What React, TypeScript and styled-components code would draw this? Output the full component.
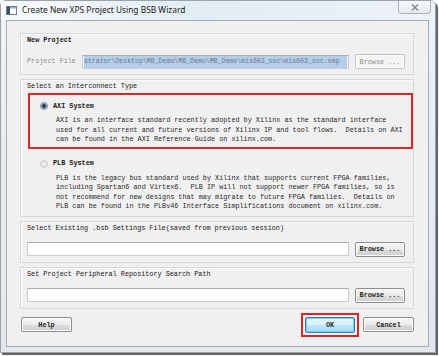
import React from 'react';
import styled, { createGlobalStyle } from 'styled-components';

const GlobalStyle = createGlobalStyle`
  html, body {
    margin: 0;
    padding: 0;
    background: #ffffff;
  }
  #root {
    width: 439px;
    height: 356px;
    overflow: hidden;
  }
`;

// Cadre de la fenêtre (style Windows 7, inactif)
const Window = styled.div`
  box-sizing: border-box;
  width: 436px;
  height: 353px;
  display: flex;
  flex-direction: column;
  padding: 0 6px 5px 5px;
  border: 1px solid #9aa3ac;
  border-radius: 6px 6px 0 0;
  background: linear-gradient(180deg, #eef3f7 0%, #e8edf1 40%, #e4e8ec 100%);
  box-shadow: 2px 2px 1px rgba(40, 40, 40, 0.75);
`;

const TitleBar = styled.div`
  height: 19px;
  margin: 0 -6px 0 -5px;
  padding: 0 4px 0 4px;
  display: flex;
  align-items: flex-start;
  background: linear-gradient(90deg, rgba(255, 255, 255, 0.6), rgba(214, 230, 242, 0.5) 45%, rgba(236, 242, 247, 0.4));
`;

const AppIcon = styled.svg`
  margin: 5px 5px 0 1px;
  flex: none;
`;

const Title = styled.span`
  margin-top: 3px;
  font-family: 'Noto Sans', 'Open Sans', sans-serif;
  font-size: 8.4px;
  line-height: 12px;
  color: #1b1b1b;
  white-space: nowrap;
`;

const CloseButton = styled.div`
  margin-left: auto;
  width: 33px;
  height: 13px;
  box-sizing: border-box;
  border: 1px solid #a9b2bb;
  border-top: none;
  border-radius: 0 0 4px 4px;
  background: linear-gradient(180deg, #f8f9fb, #e7ebef);
  display: flex;
  align-items: center;
  justify-content: center;
`;

const Pane = styled.div`
  flex: 1;
  display: flex;
  flex-direction: column;
  padding: 12px 14px 0 13px;
  border: 1px solid #a4aeb8;
  background: #f0f0f0;
`;

const Group = styled.div<{ $tight?: boolean }>`
  display: flex;
  flex-direction: column;
  margin-bottom: 4px;
  padding: 2px 8px ${({ $tight }) => ($tight ? '0' : '5px')} 6px;
  border: 1px solid #d6d9dc;
  box-shadow: inset 1px 1px 0 #fafafa;
`;

const mono = `'Liberation Mono', 'DejaVu Sans Mono', monospace`;

const Label = styled.div<{ $bold?: boolean; $muted?: boolean }>`
  font-family: ${mono};
  font-size: 6.8px;
  line-height: 9px;
  font-weight: ${({ $bold }) => ($bold ? 700 : 400)};
  color: ${({ $muted }) => ($muted ? '#8a8a8a' : '#202020')};
  white-space: pre;
`;

const Row = styled.div`
  display: flex;
  align-items: center;
  gap: 6px;
  margin-top: 9px;
`;

const Field = styled.div<{ $disabled?: boolean }>`
  flex: 1;
  min-width: 0;
  height: 14px;
  box-sizing: border-box;
  display: flex;
  align-items: center;
  padding: 0 1px;
  overflow: hidden;
  border: 1px solid #c9cdd2;
  border-top-color: #abadb3;
  background: ${({ $disabled }) => ($disabled ? '#f4f4f4' : '#ffffff')};
`;

const Selection = styled.span`
  flex: 1;
  height: 12px;
  display: flex;
  align-items: center;
  font-family: ${mono};
  font-size: 6.55px;
  color: #6e7b89;
  background: #b3cdea;
  white-space: pre;
  overflow: hidden;
`;

const Button = styled.div<{ $disabled?: boolean; $default?: boolean; $w?: number }>`
  flex: none;
  width: ${({ $w }) => $w ?? 50}px;
  height: ${({ $default }) => ($default ? 16 : 15)}px;
  box-sizing: border-box;
  display: flex;
  align-items: center;
  justify-content: center;
  border-radius: 2px;
  border: 1px solid ${({ $disabled, $default }) => ($disabled ? '#c0c3c6' : $default ? '#3d7bad' : '#8d8d8d')};
  background: ${({ $disabled, $default }) =>
    $disabled
      ? '#f4f4f4'
      : $default
      ? 'linear-gradient(180deg, #eaf6fd 0%, #d9f0fc 50%, #bee6fd 51%, #a7d9f5 100%)'
      : 'linear-gradient(180deg, #f6f6f6 0%, #ebebeb 50%, #dddddd 51%, #cfcfcf 100%)'};
  box-shadow: ${({ $default }) => ($default ? 'inset 0 0 0 1px #6fd0f5' : 'inset 0 0 0 1px #fcfcfc')};
  font-family: ${mono};
  font-size: 6.8px;
  font-weight: ${({ $disabled }) => ($disabled ? 400 : 700)};
  color: ${({ $disabled }) => ($disabled ? '#8e8e8e' : '#1e1e1e')};
  white-space: pre;
`;

// Encadré rouge d'annotation autour d'une option
const Option = styled.div<{ $marked?: boolean }>`
  margin: 2px -8px 0 1px;
  padding: 6px 0 2px 10px;
  border: 2px solid ${({ $marked }) => ($marked ? '#d6262b' : 'transparent')};
`;

const RadioRow = styled.div`
  display: flex;
  align-items: center;
  gap: 5px;
  height: 10px;
`;

const Radio = styled.span<{ $checked?: boolean }>`
  width: 8px;
  height: 8px;
  box-sizing: border-box;
  border-radius: 50%;
  border: 1px solid ${({ $checked }) => ($checked ? '#7f8a95' : '#c9cccf')};
  background: ${({ $checked }) =>
    $checked
      ? 'radial-gradient(circle at 50% 50%, #1f3347 0, #2e4a66 1.6px, #9fb4c8 2.6px, #e4eaf0 3.4px)'
      : 'radial-gradient(circle at 40% 40%, #f4f4f4, #d8d8d8)'};
`;

const Description = styled.div`
  margin: 5px 0 0 16px;
  font-family: ${mono};
  font-size: 6.8px;
  line-height: 9.5px;
  color: #2a2a2a;
  white-space: pre;
`;

const Footer = styled.div`
  display: flex;
  align-items: center;
`;

const Spacer = styled.div`
  flex: 1;
`;

const FocusMark = styled.div`
  padding: 2px;
  margin-right: 4px;
  border: 2px solid #d6262b;
`;

const HelpWrap = styled.div`
  margin-left: 1px;
`;

const App: React.FC = () => {
  return (
    <>
      <GlobalStyle />
      <Window>
        <TitleBar>
          <AppIcon width="11" height="9" viewBox="0 0 11 9">
            <rect x="0.5" y="0.5" width="10" height="8" fill="#ffffff" stroke="#6f7d8a" />
            <rect x="1" y="1" width="3" height="7" fill="#3c4f63" />
            <rect x="4" y="1" width="6" height="1.5" fill="#9fb3c6" />
          </AppIcon>
          <Title>Create New XPS Project Using BSB Wizard</Title>
          <CloseButton>
            <svg width="8" height="7" viewBox="0 0 8 7">
              <path d="M1 0.5 L7 6.5 M7 0.5 L1 6.5" stroke="#7c8389" strokeWidth="1.3" fill="none" />
            </svg>
          </CloseButton>
        </TitleBar>
        <Pane>
          <Group>
            <Label $bold>New Project</Label>
            <Row>
              <Label $muted>Project File</Label>
              <Field $disabled>
                <Selection>strator\Desktop\MB_Demo\MB_Demo\MB_Demo\mis603_soc\mis603_soc.xmp</Selection>
              </Field>
              <Button $disabled>Browse ...</Button>
            </Row>
          </Group>

          <Group $tight>
            <Label>Select an Interconnect Type</Label>
            <Option $marked>
              <RadioRow>
                <Radio $checked />
                <Label $bold>AXI System</Label>
              </RadioRow>
              <Description>
                {'AXI is an interface standard recently adopted by Xilinx as the standard interface\n' +
                  'used for all current and future versions of Xilinx IP and tool flows.  Details on AXI\n' +
                  'can be found in the AXI Reference Guide on xilinx.com.'}
              </Description>
            </Option>
            <Option>
              <RadioRow>
                <Radio />
                <Label $bold>PLB System</Label>
              </RadioRow>
              <Description>
                {'PLB is the legacy bus standard used by Xilinx that supports current FPGA families,\n' +
                  'including Spartan6 and Virtex6.  PLB IP will not support newer FPGA families, so is\n' +
                  'not recommend for new designs that may migrate to future FPGA families.  Details on\n' +
                  'PLB can be found in the PLBv46 Interface Simplifications document on xilinx.com.'}
              </Description>
            </Option>
          </Group>

          <Group>
            <Label>Select Existing .bsb Settings File(saved from previous session)</Label>
            <Row>
              <Field />
              <Button>Browse ...</Button>
            </Row>
          </Group>

          <Group>
            <Label>Set Project Peripheral Repository Search Path</Label>
            <Row>
              <Field />
              <Button>Browse ...</Button>
            </Row>
          </Group>

          <Footer>
            <HelpWrap>
              <Button $w={51}>Help</Button>
            </HelpWrap>
            <Spacer />
            <FocusMark>
              <Button $default>OK</Button>
            </FocusMark>
            <Button $w={51}>Cancel</Button>
          </Footer>
        </Pane>
      </Window>
    </>
  );
};

export default App;
